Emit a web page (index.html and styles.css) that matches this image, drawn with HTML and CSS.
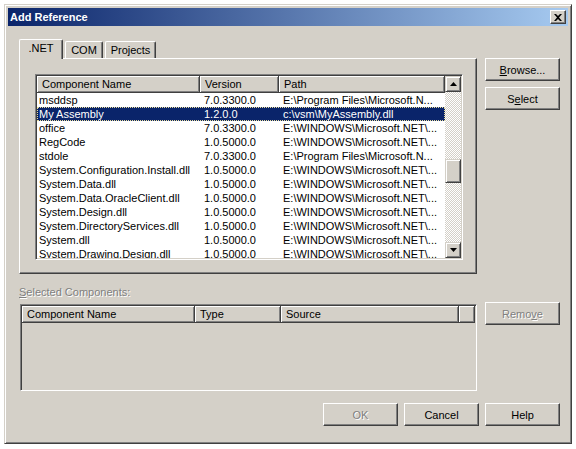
FILE: index.html
```html
<!DOCTYPE html>
<html lang="en">
<head>
    <meta charset="UTF-8">
    <title>Add Reference</title>
    <link rel="stylesheet" href="styles.css">
</head>
<body>

<div class="window">
    <div class="titlebar">
        <span class="title">Add Reference</span>
        <button class="close-btn" type="button">
            <svg width="8" height="7" viewBox="0 0 8 7"><path d="M0 0h2l2 2 2-2h2L5 3.5 8 7H6L4 5 2 7H0l3-3.5z" fill="#000"/></svg>
        </button>
    </div>

    <div class="client">
        <div class="tabs-area">
            <div class="tabs">
                <div class="tab active tab-net">.NET</div>
                <div class="tab tab-com">COM</div>
                <div class="tab tab-projects">Projects</div>
            </div>
            <div class="tab-panel">
                <div class="listview">
                    <div class="list-body">
                        <div class="list-header">
                            <div class="hcell">Component Name</div>
                            <div class="hcell">Version</div>
                            <div class="hcell">Path</div>
                        </div>
                        <div class="row"><span>msddsp</span><span>7.0.3300.0</span><span>E:\Program Files\Microsoft.N...</span></div>
                        <div class="row selected"><span>My Assembly</span><span>1.2.0.0</span><span>c:\vsm\MyAssembly.dll</span></div>
                        <div class="row"><span>office</span><span>7.0.3300.0</span><span>E:\WINDOWS\Microsoft.NET\...</span></div>
                        <div class="row"><span>RegCode</span><span>1.0.5000.0</span><span>E:\WINDOWS\Microsoft.NET\...</span></div>
                        <div class="row"><span>stdole</span><span>7.0.3300.0</span><span>E:\Program Files\Microsoft.N...</span></div>
                        <div class="row"><span>System.Configuration.Install.dll</span><span>1.0.5000.0</span><span>E:\WINDOWS\Microsoft.NET\...</span></div>
                        <div class="row"><span>System.Data.dll</span><span>1.0.5000.0</span><span>E:\WINDOWS\Microsoft.NET\...</span></div>
                        <div class="row"><span>System.Data.OracleClient.dll</span><span>1.0.5000.0</span><span>E:\WINDOWS\Microsoft.NET\...</span></div>
                        <div class="row"><span>System.Design.dll</span><span>1.0.5000.0</span><span>E:\WINDOWS\Microsoft.NET\...</span></div>
                        <div class="row"><span>System.DirectoryServices.dll</span><span>1.0.5000.0</span><span>E:\WINDOWS\Microsoft.NET\...</span></div>
                        <div class="row"><span>System.dll</span><span>1.0.5000.0</span><span>E:\WINDOWS\Microsoft.NET\...</span></div>
                        <div class="row"><span>System.Drawing.Design.dll</span><span>1.0.5000.0</span><span>E:\WINDOWS\Microsoft.NET\...</span></div>
                    </div>
                    <div class="vscroll">
                        <div class="sb-btn">
                            <svg width="7" height="4" viewBox="0 0 7 4"><path d="M3.5 0L7 4H0z" fill="#000"/></svg>
                        </div>
                        <div class="sb-track">
                            <div class="sb-thumb"></div>
                        </div>
                        <div class="sb-btn">
                            <svg width="7" height="4" viewBox="0 0 7 4"><path d="M0 0h7L3.5 4z" fill="#000"/></svg>
                        </div>
                    </div>
                </div>
            </div>
        </div>

        <div class="side-buttons">
            <button class="btn" type="button"><u>B</u>rowse...</button>
            <button class="btn" type="button">S<u>e</u>lect</button>
        </div>

        <div class="selected-area">
            <div class="group-label disabled"><u>S</u>elected Components:</div>
            <div class="listview listview-off">
                <div class="list-header sel-header">
                    <div class="hcell">Component Name</div>
                    <div class="hcell">Type</div>
                    <div class="hcell">Source</div>
                    <div class="hcell"></div>
                </div>
            </div>
        </div>

        <div class="side-buttons side-remove">
            <button class="btn disabled" type="button" disabled>Remo<u>v</u>e</button>
        </div>

        <div class="footer">
            <button class="btn disabled" type="button" disabled>OK</button>
            <button class="btn" type="button">Cancel</button>
            <button class="btn" type="button">Help</button>
        </div>
    </div>
</div>

</body>
</html>
```

FILE: styles.css
```css
body {
    margin: 0;
    background-color: #fff;
    font-family: "Liberation Sans", Arial, sans-serif;
    font-size: 11px;
    color: #000;
}
.window {
    margin: 4px;
    width: 568px;
    height: 440px;
    box-sizing: border-box;
    padding: 3px;
    background-color: #d4d0c8;
    border: 1px solid;
    border-color: #d4d0c8 #404040 #404040 #d4d0c8;
    box-shadow: inset 1px 1px #fff, inset -1px -1px #808080;
}
.titlebar {
    height: 18px;
    display: flex;
    align-items: center;
    justify-content: space-between;
    padding: 0 2px;
    background: linear-gradient(to right, #0a246a, #a6caf0);
}
.title {
    color: #fff;
    font-weight: bold;
    font-size: 11px;
}
.close-btn {
    width: 16px;
    height: 14px;
    padding: 0;
    display: flex;
    align-items: center;
    justify-content: center;
    background-color: #d4d0c8;
    border: 1px solid;
    border-color: #fff #404040 #404040 #fff;
    box-shadow: inset -1px -1px #808080;
}
.client {
    display: grid;
    grid-template-columns: 458px 75px;
    column-gap: 8px;
    padding: 13px 0 0 11px;
}

/* tabs */
.tabs {
    display: flex;
    align-items: flex-end;
    height: 19px;
}
.tab {
    height: 17px;
    box-sizing: border-box;
    margin-left: 2px;
    border: 1px solid;
    border-bottom: none;
    border-color: #fff #404040 #404040 #fff;
    border-radius: 2px 2px 0 0;
    box-shadow: inset -1px 0 #808080;
    text-align: center;
    line-height: 16px;
}
.tab.active {
    height: 20px;
    margin-left: 0;
    margin-bottom: -1px;
    position: relative;
    z-index: 1;
    background-color: #d4d0c8;
    line-height: 17px;
}
.tab-net { width: 44px; }
.tab-com { width: 38px; }
.tab-projects { width: 51px; }
.tab-panel {
    height: 216px;
    box-sizing: border-box;
    padding: 15px 0 0 15px;
    border: 1px solid;
    border-color: #fff #404040 #404040 #fff;
    box-shadow: inset -1px -1px #808080;
}

/* list views */
.listview {
    display: flex;
    width: 428px;
    height: 186px;
    box-sizing: border-box;
    padding: 1px;
    background-color: #fff;
    border: 1px solid;
    border-color: #808080 #fff #fff #808080;
    box-shadow: inset 1px 1px #404040, inset -1px -1px #d4d0c8;
}
.list-body {
    flex: 1;
    overflow: hidden;
}
.list-header {
    display: grid;
    grid-template-columns: 163px 79px 166px;
    height: 17px;
}
.hcell {
    box-sizing: border-box;
    padding-left: 5px;
    line-height: 16px;
    white-space: nowrap;
    overflow: hidden;
    background-color: #d4d0c8;
    border-right: 1px solid #404040;
    border-bottom: 1px solid #404040;
    box-shadow: inset 1px 1px #fff, inset -1px -1px #808080;
}
.row {
    display: grid;
    grid-template-columns: 163px 79px 166px;
    height: 14px;
    line-height: 14px;
}
.row span {
    padding-left: 4px;
    white-space: nowrap;
    overflow: hidden;
}
.row span:first-child {
    padding-left: 2px;
}
.row.selected {
    background-color: #0a246a;
    color: #fff;
    outline: 1px dotted #e8dc9c;
    outline-offset: -1px;
}

/* scrollbar */
.vscroll {
    width: 16px;
    display: flex;
    flex-direction: column;
}
.sb-btn, .sb-thumb {
    width: 16px;
    height: 16px;
    box-sizing: border-box;
    display: flex;
    align-items: center;
    justify-content: center;
    background-color: #d4d0c8;
    border: 1px solid;
    border-color: #d4d0c8 #404040 #404040 #d4d0c8;
    box-shadow: inset 1px 1px #fff, inset -1px -1px #808080;
}
.sb-track {
    flex: 1;
    background: repeating-conic-gradient(#fff 0 25%, #d4d0c8 0 50%) 0 0 / 2px 2px;
}
.sb-thumb {
    height: 24px;
    margin-top: 67px;
}

/* buttons */
.side-buttons {
    display: flex;
    flex-direction: column;
    gap: 6px;
    padding-top: 19px;
}
.side-remove {
    padding-top: 28px;
}
.btn {
    width: 75px;
    height: 23px;
    padding: 0;
    font-family: "Liberation Sans", Arial, sans-serif;
    font-size: 11px;
    color: #000;
    background-color: #d4d0c8;
    border: 1px solid;
    border-color: #fff #404040 #404040 #fff;
    box-shadow: inset -1px -1px #808080;
}
.disabled {
    color: #808080;
    text-shadow: 1px 1px 0 #fff;
}

/* selected components */
.selected-area {
    padding-top: 12px;
}
.group-label {
    line-height: 13px;
}
.listview-off {
    display: block;
    width: 457px;
    height: 87px;
    margin: 5px 0 0 1px;
    background-color: #d4d0c8;
}
.sel-header {
    grid-template-columns: 173px 86px 178px 16px;
}
.footer {
    grid-column: 1 / -1;
    display: flex;
    justify-content: flex-end;
    gap: 6px;
    margin-top: 12px;
}
```
